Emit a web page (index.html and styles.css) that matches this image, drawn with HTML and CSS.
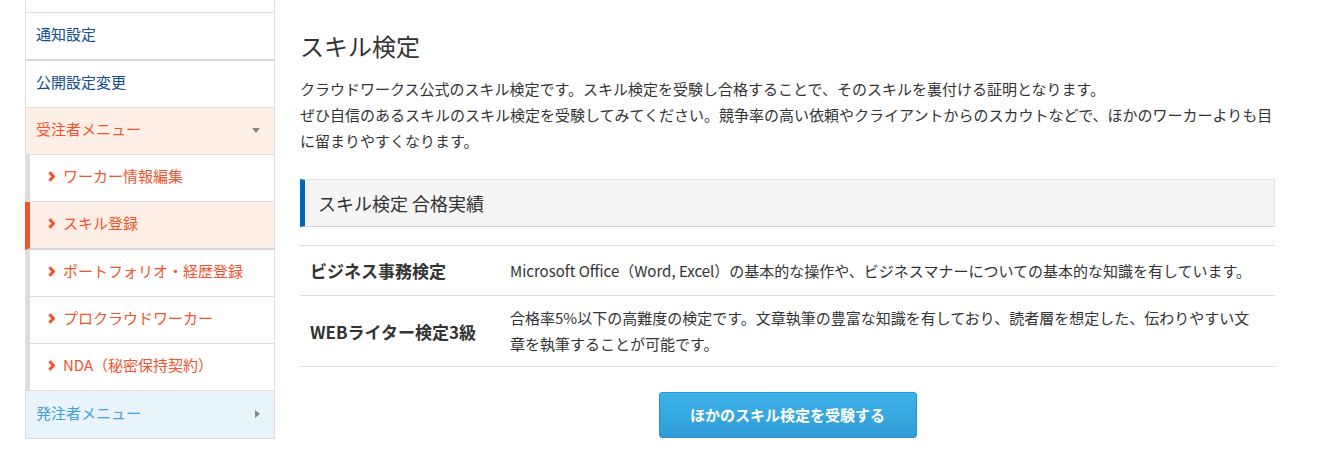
FILE: index.html
```html
<!DOCTYPE html>
<html lang="ja">
<head>
  <meta charset="UTF-8">
  <meta name="viewport" content="width=device-width, initial-scale=1">
  <title>スキル検定</title>
  <link rel="stylesheet" href="styles.css">
</head>
<body>

  <div class="page">

    <ul class="side-menu">
      <li class="menu-item menu-cut"></li>
      <li class="menu-item thick"><a href="#">通知設定</a></li>
      <li class="menu-item"><a href="#">公開設定変更</a></li>
      <li class="menu-item menu-open">
        <a href="#">受注者メニュー</a>
        <span class="tri-down"></span>
      </li>
      <li class="sub-item"><a href="#"><span class="chev"><svg width="7" height="11" viewBox="0 0 7 11"><polyline points="1.4,1.2 5.4,5.5 1.4,9.8" fill="none" stroke="#f0542d" stroke-width="3"/></svg></span>ワーカー情報編集</a></li>
      <li class="sub-item active thick"><a href="#"><span class="chev"><svg width="7" height="11" viewBox="0 0 7 11"><polyline points="1.4,1.2 5.4,5.5 1.4,9.8" fill="none" stroke="#f0542d" stroke-width="3"/></svg></span>スキル登録</a></li>
      <li class="sub-item"><a href="#"><span class="chev"><svg width="7" height="11" viewBox="0 0 7 11"><polyline points="1.4,1.2 5.4,5.5 1.4,9.8" fill="none" stroke="#f0542d" stroke-width="3"/></svg></span>ポートフォリオ・経歴登録</a></li>
      <li class="sub-item"><a href="#"><span class="chev"><svg width="7" height="11" viewBox="0 0 7 11"><polyline points="1.4,1.2 5.4,5.5 1.4,9.8" fill="none" stroke="#f0542d" stroke-width="3"/></svg></span>プロクラウドワーカー</a></li>
      <li class="sub-item"><a href="#"><span class="chev"><svg width="7" height="11" viewBox="0 0 7 11"><polyline points="1.4,1.2 5.4,5.5 1.4,9.8" fill="none" stroke="#f0542d" stroke-width="3"/></svg></span>NDA（秘密保持契約）</a></li>
      <li class="menu-item menu-client">
        <a href="#">発注者メニュー</a>
        <span class="tri-right"></span>
      </li>
    </ul>

    <div class="main">
      <h1 class="page-title">スキル検定</h1>
      <p class="lead">
        クラウドワークス公式のスキル検定です。スキル検定を受験し合格することで、そのスキルを裏付ける証明となります。<br>
        ぜひ自信のあるスキルのスキル検定を受験してみてください。競争率の高い依頼やクライアントからのスカウトなどで、ほかのワーカーよりも目に留まりやすくなります。
      </p>

      <h2 class="section-title">スキル検定 合格実績</h2>

      <div class="result-table">
        <div class="result-row">
          <div class="result-name">ビジネス事務検定</div>
          <div class="result-desc">Microsoft Office（Word, Excel）の基本的な操作や、ビジネスマナーについての基本的な知識を有しています。</div>
        </div>
        <div class="result-row">
          <div class="result-name">WEBライター検定3級</div>
          <div class="result-desc">合格率5%以下の高難度の検定です。文章執筆の豊富な知識を有しており、読者層を想定した、伝わりやすい文章を執筆することが可能です。</div>
        </div>
      </div>

      <div class="btn-wrap">
        <a class="btn" href="#">ほかのスキル検定を受験する</a>
      </div>
    </div>

  </div>

</body>
</html>
```

FILE: styles.css
```css
body {
  margin: 0;
  font-family: "Noto Sans CJK JP", "Noto Sans", sans-serif;
  color: #333;
  background: #fff;
}
a {
  text-decoration: none;
}
.page {
  display: flex;
  align-items: flex-start;
  gap: 25px;
  margin-top: -34px;
  padding-left: 25px;
}

/* side menu */
.side-menu {
  width: 250px;
  box-sizing: border-box;
  margin: 0;
  padding: 0;
  list-style: none;
  border-left: 1px solid #ddd;
  border-right: 1px solid #ddd;
  flex-shrink: 0;
}
.menu-item {
  display: flex;
  align-items: center;
  justify-content: space-between;
  height: 47px;
  box-sizing: border-box;
  padding: 0 14px 5px 10px;
  border-bottom: 1px solid #ddd;
  font-size: 15px;
}
.menu-item a {
  color: #104d8c;
}
.menu-item.thick {
  height: 48px;
  border-bottom: 2px solid #d6d6d6;
}
.menu-open {
  background: #fdefe6;
}
.menu-open a {
  color: #f0542d;
}
.menu-item.menu-client {
  background: #e8f3fa;
  height: 48px;
}
.menu-client a {
  color: #45a1d9;
}
.tri-down {
  width: 0;
  height: 0;
  margin-top: 4px;
  border-left: 4px solid transparent;
  border-right: 4px solid transparent;
  border-top: 5px solid #888;
}
.tri-right {
  width: 0;
  height: 0;
  margin-top: 4px;
  border-top: 4px solid transparent;
  border-bottom: 4px solid transparent;
  border-left: 5px solid #888;
}
.sub-item {
  display: flex;
  align-items: center;
  height: 47px;
  box-sizing: border-box;
  margin-left: -1px;
  padding: 0 0 5px 18px;
  border-left: 5px solid #ddd;
  border-bottom: 1px solid #ddd;
  font-size: 15px;
}
.sub-item.thick {
  height: 48px;
  border-bottom: 2px solid #d6d6d6;
}
.sub-item a {
  display: flex;
  align-items: center;
  color: #f0542d;
}
.sub-item.active {
  background: #fdefe6;
  border-left-color: #f0542d;
}
.chev {
  display: flex;
  width: 7px;
  margin: 2px 8px 0 0;
}

/* main */
.main {
  width: 975px;
  padding-top: 63px;
}
.page-title {
  margin: 0 0 13px;
  font-size: 24px;
  font-weight: normal;
  line-height: 34px;
}
.lead {
  margin: 0 0 25px;
  font-size: 15px;
  line-height: 26px;
}
.section-title {
  margin: 0;
  height: 46px;
  display: flex;
  align-items: center;
  padding-left: 13px;
  background: #f5f5f5;
  border: 1px solid #e2e2e2;
  border-bottom-color: #d0d0d0;
  border-left: 5px solid #0068b7;
  font-size: 18px;
  font-weight: normal;
}
.result-table {
  margin-top: 18px;
  border-top: 1px solid #ddd;
}
.result-row {
  display: grid;
  grid-template-columns: 200px 1fr;
  align-items: center;
  border-bottom: 1px solid #ddd;
}
.result-name {
  padding: 9px 10px;
  font-size: 17px;
  font-weight: bold;
  line-height: 31px;
}
.result-desc {
  padding: 9px 15px 9px 10px;
  font-size: 15px;
  line-height: 26px;
}
.btn-wrap {
  display: flex;
  justify-content: center;
  margin-top: 25px;
}
.btn {
  display: flex;
  align-items: center;
  justify-content: center;
  width: 258px;
  height: 46px;
  box-sizing: border-box;
  padding-bottom: 2px;
  border: 1px solid #2a93cc;
  border-radius: 3px;
  background: linear-gradient(#3eb4ea, #2f9bd4);
  color: #fff;
  font-size: 15px;
  font-weight: bold;
}
```
